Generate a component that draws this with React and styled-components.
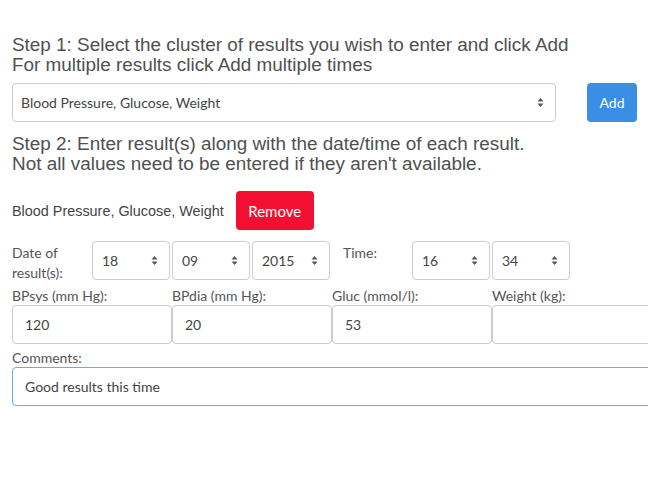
import React, { useState } from 'react';
import styled, { createGlobalStyle } from 'styled-components';

const arrows =
  "url(\"data:image/svg+xml;utf8,<svg xmlns='http://www.w3.org/2000/svg' width='7' height='11' viewBox='0 0 7 11'><path d='M3.5 1 L6.5 4.5 L0.5 4.5 Z' fill='%23555'/><path d='M3.5 10 L6.5 6.5 L0.5 6.5 Z' fill='%23555'/></svg>\")";

const GlobalStyle = createGlobalStyle`
  body {
    margin: 0;
    overflow: hidden;
    background: #fff;
    font-family: Lato, "Open Sans", sans-serif;
    font-size: 14px;
    color: #555;
  }
`;

const Page = styled.div`
  padding: 35px 0 0 12px;
  width: 640px;
`;

const Heading = styled.h3`
  margin: 0;
  font-family: "Liberation Sans", Arial, sans-serif;
  font-weight: 400;
  font-size: 18.9px;
  line-height: 20px;
  color: #505050;
`;

const PickRow = styled.div`
  display: flex;
  gap: 31px;
  margin: 8px 0 12px;
`;

const Select = styled.select`
  appearance: none;
  box-sizing: border-box;
  width: ${(p) => p.$w || 78}px;
  height: 39px;
  padding: 0 20px 0 ${(p) => p.$pad || 9}px;
  border: 1px solid #ccc;
  border-radius: 4px;
  background: #fff ${arrows} no-repeat right 11px center;
  font-family: Lato, sans-serif;
  font-size: 14px;
  color: #444;
  outline: none;
`;

const Button = styled.button`
  box-sizing: border-box;
  height: 39px;
  width: ${(p) => p.$w}px;
  border: none;
  border-radius: 4px;
  background: ${(p) => (p.$danger ? '#f20f32' : '#3a8ee6')};
  color: #fff;
  font-family: Lato, sans-serif;
  font-size: ${(p) => (p.$danger ? 15 : 14)}px;
  cursor: pointer;
`;

const ClusterRow = styled.div`
  display: flex;
  align-items: center;
  gap: 12px;
  margin-top: 17px;
`;

const ClusterName = styled.span`
  font-family: "Liberation Sans", Arial, sans-serif;
  font-size: 14.4px;
  color: #444;
`;

const DateRow = styled.div`
  display: flex;
  align-items: flex-start;
  gap: 2px;
  margin-top: 11px;
`;

const SideLabel = styled.div`
  width: ${(p) => p.$w}px;
  margin-left: ${(p) => p.$ml || 0}px;
  padding-top: ${(p) => p.$pt || 2}px;
  line-height: 20px;
  font-size: 14px;
  color: #555;
`;

const Grid = styled.div`
  display: grid;
  grid-template-columns: repeat(4, 160px);
  margin-top: 3px;
`;

const Field = styled.label`
  display: flex;
  flex-direction: column;
`;

const FieldLabel = styled.span`
  line-height: 19px;
  font-size: 14px;
  color: #555;
`;

const Input = styled.input`
  box-sizing: border-box;
  width: 160px;
  height: 39px;
  padding: 0 12px;
  border: 1px solid ${(p) => (p.$focus ? '#66afe9' : '#ccc')};
  border-radius: 4px;
  font-family: Lato, sans-serif;
  font-size: 14px;
  color: #444;
  outline: none;
  ${(p) => p.$wide && 'width: 640px;'}
`;

const Comments = styled(Field)`
  margin-top: 4px;
`;

export default function App() {
  const [vals, setVals] = useState({ sys: '120', dia: '20', gluc: '53', weight: '', note: 'Good results this time' });
  const set = (k) => (e) => setVals({ ...vals, [k]: e.target.value });

  return (
    <>
      <GlobalStyle />
      <Page>
        <Heading>
          Step 1: Select the cluster of results you wish to enter and click Add
          <br />
          For multiple results click Add multiple times
        </Heading>
        <PickRow>
          <Select $w={544} $pad={8} defaultValue='bgw'>
            <option value='bgw'>Blood Pressure, Glucose, Weight</option>
          </Select>
          <Button $w={50}>Add</Button>
        </PickRow>
        <Heading>
          Step 2: Enter result(s) along with the date/time of each result.
          <br />
          Not all values need to be entered if they aren't available.
        </Heading>

        <ClusterRow>
          <ClusterName>Blood Pressure, Glucose, Weight</ClusterName>
          <Button $danger $w={78}>Remove</Button>
        </ClusterRow>

        <DateRow>
          <SideLabel $w={78}>
            Date of
            <br />
            result(s):
          </SideLabel>
          <Select defaultValue='18'>
            <option>18</option>
          </Select>
          <Select defaultValue='09'>
            <option>09</option>
          </Select>
          <Select defaultValue='2015'>
            <option>2015</option>
          </Select>
          <SideLabel $w={67} $ml={11} $pt={0}>Time:</SideLabel>
          <Select defaultValue='16'>
            <option>16</option>
          </Select>
          <Select defaultValue='34'>
            <option>34</option>
          </Select>
        </DateRow>

        <Grid>
          <Field>
            <FieldLabel>BPsys (mm Hg):</FieldLabel>
            <Input value={vals.sys} onChange={set('sys')} />
          </Field>
          <Field>
            <FieldLabel>BPdia (mm Hg):</FieldLabel>
            <Input value={vals.dia} onChange={set('dia')} />
          </Field>
          <Field>
            <FieldLabel>Gluc (mmol/l):</FieldLabel>
            <Input value={vals.gluc} onChange={set('gluc')} />
          </Field>
          <Field>
            <FieldLabel>Weight (kg):</FieldLabel>
            <Input value={vals.weight} onChange={set('weight')} />
          </Field>
        </Grid>

        <Comments>
          <FieldLabel>Comments:</FieldLabel>
          <Input $wide $focus value={vals.note} onChange={set('note')} />
        </Comments>
      </Page>
    </>
  );
}
